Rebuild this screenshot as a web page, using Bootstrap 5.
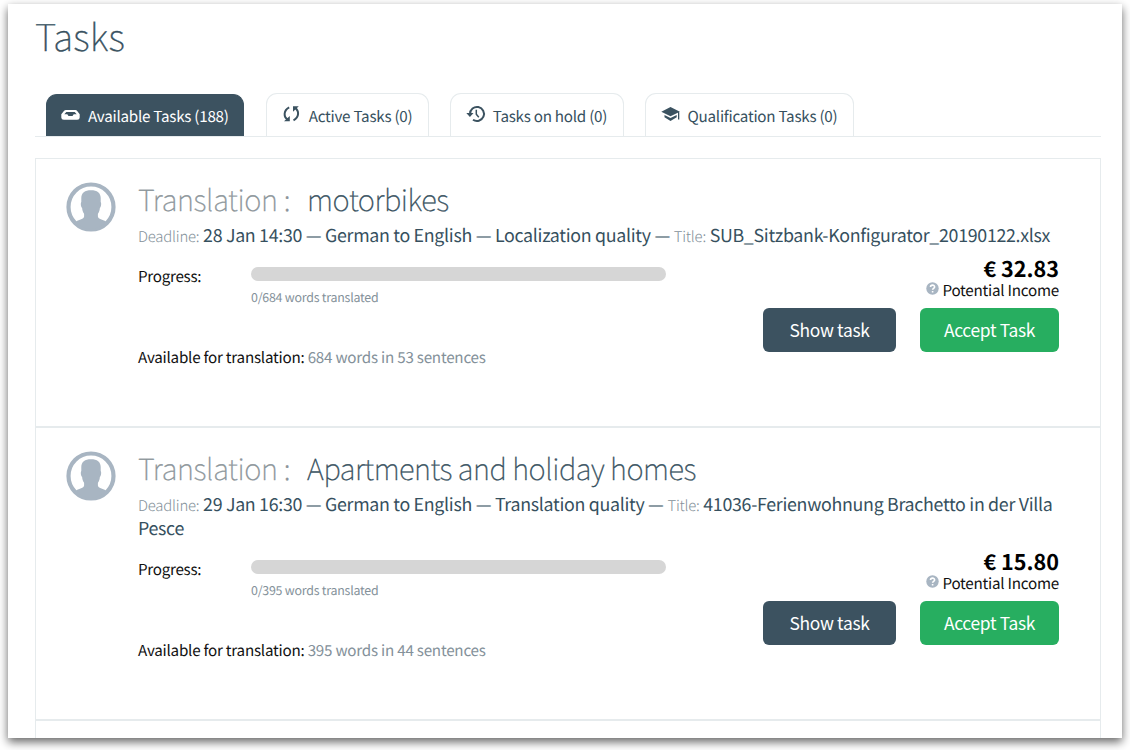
<!DOCTYPE html>
<html lang="en">
<head>
<meta charset="utf-8">
<meta name="viewport" content="width=device-width, initial-scale=1">
<title>Tasks</title>
<link rel="stylesheet" href="https://cdn.jsdelivr.net/npm/bootstrap@5.3.0/dist/css/bootstrap.min.css">
<style>
  :root { --ink: #36505e; --slate: #3c5260; --rule: #e6ebed; --mute: #84919a; }
  body { font-family: "Noto Sans CJK SC", sans-serif; color: #111; background: #fff; height: 750px; text-rendering: geometricPrecision; }
  body * { letter-spacing: -.018em; }
  .sheet { margin: 4px 8px 0; height: 734px; padding: 0 21px 0 27px; background: #fff; box-shadow: 0 4px 9px rgba(0,0,0,.6); }
  h1 { font-size: 37px; line-height: 44px; font-weight: 100; -webkit-text-stroke: .4px; letter-spacing: .006em; color: var(--ink); padding-top: 9px; height: 89px; }
  .task-tabs { height: 44px; padding-left: 11px; gap: 20.8px; border-bottom: 1px solid var(--rule); align-items: flex-end; }
  .task-tabs .nav-link { height: 43px; padding: 0 15.6px 0 15px; margin: 0; border: 1px solid var(--rule); border-bottom: 0; border-radius: 11px 11px 0 0; color: var(--ink); font-size: 15.2px; letter-spacing: -.016em; line-height: 44px; white-space: nowrap; }
  .task-tabs .nav-link.active { background: var(--slate); border-color: var(--slate); color: #fff; height: 42px; margin-right: 1px; padding: 0 14.3px 0 14px; line-height: 43px; }
  .task-tabs svg { width: 20px; height: 20px; margin: 10px 7px 0 0; flex: none; }
  .task-list { margin-top: 21px; border: 1px solid var(--rule); border-bottom: 0; height: 580px; }
  .task-item { padding: 19px 41px 0 30px; border-bottom: 2px solid var(--rule); }
  .task-item:last-child { height: 19px; border: 0; padding: 0; }
  .avatar { width: 50px; height: 50px; margin: 4px 22.5px 0 -.5px; flex: none; }
  h2 { font-size: 29.2px; line-height: 42px; font-weight: 100; -webkit-text-stroke: .35px; letter-spacing: -.016em; color: var(--ink); margin: 0 0 4px; white-space: pre; }
  h2 span { letter-spacing: inherit; }
  h2 .kind { color: #8b9499; letter-spacing: -.012em; margin-right: 17px; }
  .meta { font-size: 17.8px; line-height: 23.5px; letter-spacing: -.0165em; color: var(--ink); margin: 0 -8px 0 0; }
  .meta .key { font-size: 14.9px; line-height: 1; font-weight: 300; letter-spacing: -.014em; color: var(--mute); }
  .details { height: 178.8px; font-size: 15.2px; line-height: 22px; }
  .progress-row { padding-top: 17.5px; }
  .progress-label { width: 113px; }
  .task-progress { width: 414.5px; height: 14px; border-radius: 7px; background: #d6d6d6; margin-top: 2.2px; }
  .words { font-size: 12.4px; line-height: 18px; color: var(--mute); margin-top: 7px; }
  .available { margin-top: 39.8px; letter-spacing: -.015em; }
  .available span { color: var(--mute); letter-spacing: inherit; }
  .price { font-size: 21.6px; line-height: 24px; font-weight: 700; letter-spacing: 0; color: #000; padding-top: 9.7px; }
  .income { line-height: 19px; letter-spacing: -.015em; }
  .income svg { width: 13px; height: 13px; margin: 0 3px 7px 0; }
  .task-actions { margin-top: 6.3px; }
  .btn-task { height: 44px; padding: 0; border: 0; border-radius: 6px; font-size: 17.4px; line-height: 44px; color: #fff; }
  .btn-show { width: 133px; background: var(--slate); }
  .btn-accept { width: 139px; background: #27ae60; }
</style>
</head>
<body>
<svg class="d-none">
  <symbol id="person" viewBox="0 0 50 50"><circle cx="25" cy="25" r="22.500" fill="#fff" stroke="#a8b5c2" stroke-width="4.200"/><path fill="#a8b5c2" d="M10 39.500c3.500-2.300 7.600-2.100 8.100-5v-2.700c-1.300-1.600-1.800-3.500-2-6-1.200-.4-1.700-5-.8-5.800v-4c0-5.200 3.500-7.800 9.700-7.800s9.700 2.600 9.700 7.800v4c.9.800.4 5.400-.8 5.800-.2 2.500-.7 4.400-2 6v2.700c.5 2.900 4.600 2.700 8.100 5C35.500 49 14.500 49 10 39.500z"/></symbol>
  <symbol id="help" viewBox="0 0 13 13"><circle cx="6.500" cy="6.500" r="6.200" fill="#a8b5c2"/><path d="M4.500 5c0-2.600 4.200-2.500 4.100-.1 0 1.400-2 1.400-2 2.900M6.600 9v1.500" fill="none" stroke="#fff" stroke-width="1.600"/></symbol>
</svg>
<main class="sheet overflow-visible">
  <h1 class="m-0">Tasks</h1>
  <nav class="nav task-tabs flex-nowrap">
    <a class="nav-link active d-flex" href="#"><svg viewBox="0 0 20 20"><path fill="#fff" fill-rule="evenodd" d="M5 5h9.500q1 0 1.700 1l2.500 3.200v3.200q0 2.300-2.500 2.300H2.800Q.3 14.700.3 12.400V9.200L2.900 6q.8-1 2.100-1zM5.300 7 3.300 9.300h3l1.200 1.700h4l1.200-1.700h3l-2-2.300z"/></svg>Available Tasks (188)</a>
    <a class="nav-link d-flex" href="#"><svg viewBox="0 0 20 20"><g fill="none" stroke="#3b5260" stroke-width="2"><path d="M7.200 3.300C1.200 6.500 1.500 13 5.800 15.700M11.500 16.300c6-3.200 5.700-9.700 1.400-12.400"/></g><path fill="#3b5260" d="M2 17.300h5.800v-5.400zM16.800 2.200H11v5.500z"/></svg>Active Tasks (0)</a>
    <a class="nav-link d-flex" href="#"><svg viewBox="0 0 20 20"><g fill="none" stroke="#3b5260" stroke-width="2"><path d="M4 10a7 7 0 1 1 3 5.700"/><path stroke-width="1.500" d="M10.300 5.800v4.500l2.500 3"/></g><path fill="#3b5260" d="M.3 9h7.200l-3.600 4z"/></svg>Tasks on hold (0)</a>
    <a class="nav-link d-flex" href="#"><svg viewBox="0 0 20 20"><path fill="#3b5260" d="M.3 7.700 9.500 3l9.400 4.700-9.400 4.600zM3.500 11l6 3 6.200-3v2.300l-6.200 3.800-6-3.800zM17 8h1.300v7.500H17z"/></svg>Qualification Tasks (0)</a>
  </nav>
  <section class="task-list overflow-hidden">
    <article class="task-item d-flex">
      <svg class="avatar"><use href="#person"/></svg>
      <div class="flex-grow-1">
        <h2><span class="kind">Translation :</span><span class="subject">motorbikes</span></h2>
        <p class="meta"><span class="key">Deadline:</span> 28 Jan 14:30 — German to English — Localization quality — <span class="key">Title:</span> SUB_Sitzbank-Konfigurator_20190122.xlsx</p>
        <div class="details d-flex justify-content-between">
          <div class="progress-row">
            <div class="d-flex"><div class="progress-label">Progress:</div><div><div class="task-progress"></div><div class="words">0/684 words translated</div></div></div>
            <div class="available">Available for translation: <span>684 words in 53 sentences</span></div>
          </div>
          <div class="text-end">
            <div class="price">€ 32.83</div>
            <div class="income"><svg><use href="#help"/></svg>Potential Income</div>
            <div class="task-actions d-flex gap-4"><button class="btn btn-task btn-show">Show task</button><button class="btn btn-task btn-accept">Accept Task</button></div>
          </div>
        </div>
      </div>
    </article>
    <article class="task-item d-flex">
      <svg class="avatar"><use href="#person"/></svg>
      <div class="flex-grow-1">
        <h2><span class="kind">Translation :</span><span class="subject">Apartments and holiday homes</span></h2>
        <p class="meta"><span class="key">Deadline:</span> 29 Jan 16:30 — German to English — Translation quality — <span class="key">Title:</span> 41036-Ferienwohnung Brachetto in der Villa Pesce</p>
        <div class="details d-flex justify-content-between">
          <div class="progress-row">
            <div class="d-flex"><div class="progress-label">Progress:</div><div><div class="task-progress"></div><div class="words">0/395 words translated</div></div></div>
            <div class="available">Available for translation: <span>395 words in 44 sentences</span></div>
          </div>
          <div class="text-end">
            <div class="price">€ 15.80</div>
            <div class="income"><svg><use href="#help"/></svg>Potential Income</div>
            <div class="task-actions d-flex gap-4"><button class="btn btn-task btn-show">Show task</button><button class="btn btn-task btn-accept">Accept Task</button></div>
          </div>
        </div>
      </div>
    </article>
    <article class="task-item"></article>
  </section>
</main>
<script src="https://cdn.jsdelivr.net/npm/bootstrap@5.3.0/dist/js/bootstrap.bundle.min.js"></script>
</body>
</html>
